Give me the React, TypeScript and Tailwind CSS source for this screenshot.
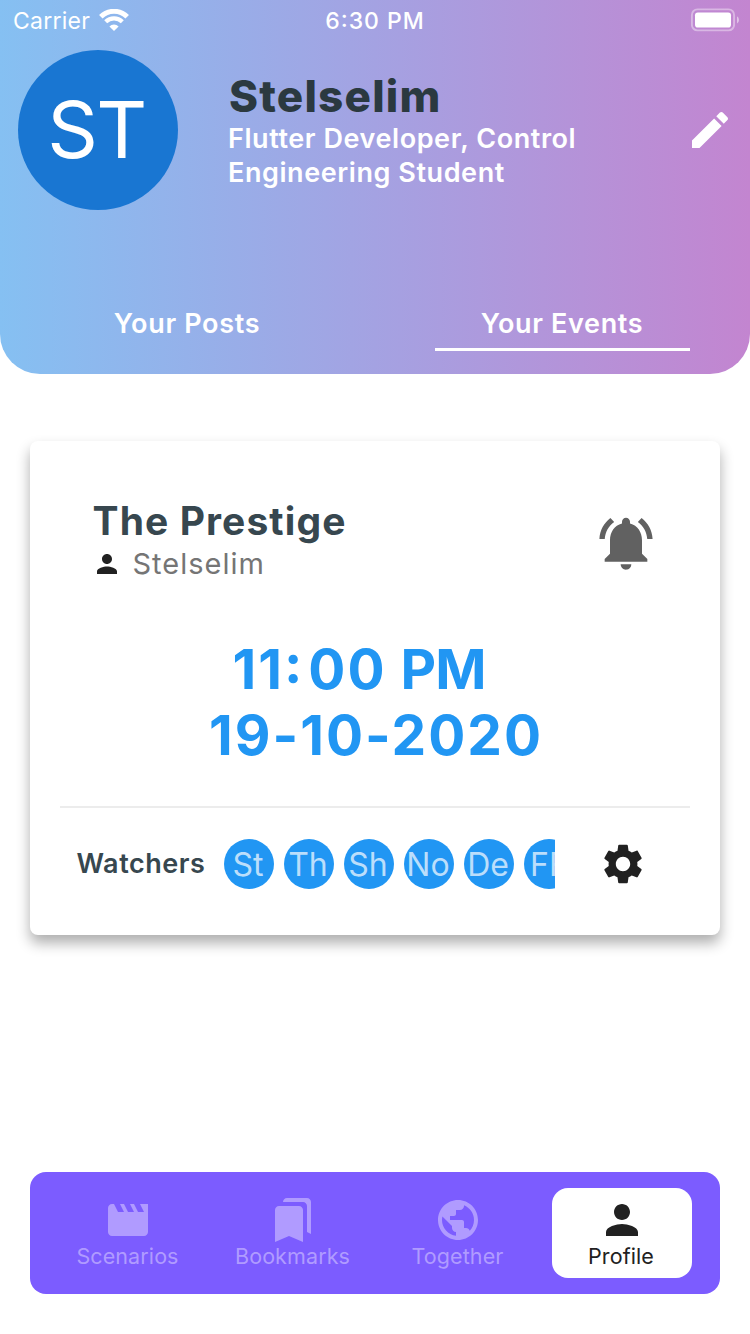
import type { ReactNode } from "react";

const ICONS = {
  edit: "M3 17.25V21h3.75L17.81 9.94l-3.75-3.75L3 17.25zM20.71 7.04c.39-.39.39-1.02 0-1.41l-2.34-2.34c-.39-.39-1.02-.39-1.41 0l-1.83 1.83 3.75 3.75 1.83-1.83z",
  person: "M12 12c2.21 0 4-1.79 4-4s-1.79-4-4-4-4 1.79-4 4 1.79 4 4 4zm0 2c-2.67 0-8 1.34-8 4v2h16v-2c0-2.66-5.33-4-8-4z",
  bell: "M7.58 4.08L6.15 2.65C3.75 4.48 2.17 7.3 2.03 10.5h2c.15-2.65 1.51-4.97 3.55-6.42zm12.39 6.42h2c-.15-3.2-1.73-6.02-4.12-7.85l-1.42 1.43c2.02 1.45 3.39 3.77 3.54 6.42zM18 11c0-3.07-1.64-5.64-4.5-6.32V4c0-.83-.67-1.5-1.5-1.5s-1.5.67-1.5 1.5v.68C7.63 5.36 6 7.92 6 11v5l-2 2v1h16v-1l-2-2v-5zm-6 11c.14 0 .27-.01.4-.04.65-.14 1.18-.58 1.44-1.18.1-.24.15-.5.15-.78h-4c.01 1.1.9 2 2.01 2z",
  gear: "M19.14 12.94c.04-.3.06-.61.06-.94 0-.32-.02-.64-.07-.94l2.03-1.58c.18-.14.23-.41.12-.61l-1.92-3.32c-.12-.22-.37-.29-.59-.22l-2.39.96c-.5-.38-1.03-.7-1.62-.94l-.36-2.54c-.04-.24-.24-.41-.48-.41h-3.84c-.24 0-.43.17-.47.41l-.36 2.54c-.59.24-1.13.57-1.62.94l-2.39-.96c-.22-.08-.47 0-.59.22L2.74 8.87c-.12.21-.08.47.12.61l2.03 1.58c-.05.3-.09.63-.09.94s.02.64.07.94l-2.03 1.58c-.18.14-.23.41-.12.61l1.92 3.32c.12.22.37.29.59.22l2.39-.96c.5.38 1.03.7 1.62.94l.36 2.54c.05.24.24.41.48.41h3.84c.24 0 .44-.17.47-.41l.36-2.54c.59-.24 1.13-.56 1.62-.94l2.39.96c.22.08.47 0 .59-.22l1.92-3.32c.12-.22.07-.47-.12-.61l-2.01-1.58zM12 15.6c-1.98 0-3.6-1.62-3.6-3.6s1.62-3.6 3.6-3.6 3.6 1.62 3.6 3.6-1.62 3.6-3.6 3.6z",
  movie: "M18 4l2 4h-3l-2-4h-2l2 4h-3l-2-4H8l2 4H7L5 4H4c-1.1 0-1.99.9-1.99 2L2 18c0 1.1.9 2 2 2h16c1.1 0 2-.9 2-2V4h-4z",
  bookmarks: "M19 18l2 1V3c0-1.1-.9-2-2-2H8.99C7.89 1 7 1.9 7 3h10c1.1 0 2 .9 2 2v13zM15 5H5c-1.1 0-2 .9-2 2v16l7-3 7 3V7c0-1.1-.9-2-2-2z",
  globe: "M12 2C6.48 2 2 6.48 2 12s4.48 10 10 10 10-4.48 10-10S17.52 2 12 2zm-1 17.93c-3.95-.49-7-3.85-7-7.93 0-.62.08-1.21.21-1.79L9 15v1c0 1.1.9 2 2 2v1.93zm6.9-2.54c-.26-.81-1-1.39-1.9-1.39h-1v-3c0-.55-.45-1-1-1H8v-2h2c.55 0 1-.45 1-1V7h2c1.1 0 2-.9 2-2v-.41c2.93 1.19 5 4.06 5 7.41 0 2.08-.8 3.97-2.1 5.39z",
};

function Icon({ name, className }: { name: keyof typeof ICONS; className: string }) {
  return (
    <svg viewBox="0 0 24 24" fill="currentColor" className={`shrink-0 ${className}`}>
      <path d={ICONS[name]} />
    </svg>
  );
}

function StatusBar() {
  return (
    <div className="grid h-10 grid-cols-3 items-center pt-[2px] text-[23px] leading-[38px] text-white">
      <div className="flex items-center pl-[13px]">
        <span className="tracking-[0.25px]">Carrier</span>
        <svg viewBox="0 0 30 22" className="mb-[3px] ml-[9px] h-[22px] w-[30px]" fill="none" stroke="white">
          <path d="M1.8 7.7 A18.8 18.8 0 0 1 28.2 7.7" strokeWidth="5" />
          <path d="M6.7 12.8 A11.8 11.8 0 0 1 23.3 12.8" strokeWidth="4.2" />
          <path d="M15 22 L10.4 17.4 A6.6 6.6 0 0 1 19.6 17.4 Z" fill="white" stroke="none" />
        </svg>
      </div>
      <div className="text-center font-medium tracking-[1px] [font-feature-settings:'case']">6:30 PM</div>
      <div className="flex justify-end pb-[2px] pr-[11px]">
        <svg viewBox="0 0 49 24" className="h-6 w-[49px]">
          <rect x="1.9" y="1.4" width="42.2" height="21" rx="5.5" fill="none" stroke="white" strokeOpacity="0.4" strokeWidth="1.9" />
          <rect x="5" y="4.5" width="36" height="15" rx="2.8" fill="white" />
          <path d="M47 8.2 q2 1.4 2 3.7 t-2 3.7z" fill="white" fillOpacity="0.5" />
        </svg>
      </div>
    </div>
  );
}

function Header() {
  return (
    <header className="h-[373.5px] rounded-b-[40px] bg-[linear-gradient(90deg,#85c0f2_0%,#a4a2e2_50%,#c385d0_100%)]">
      <StatusBar />
      <div className="mt-[10px] flex h-40 items-center pl-[18px] pr-4">
        <div className="flex size-40 shrink-0 items-center justify-center rounded-full bg-[#1976d2] pb-px pr-[3px] text-[79px] tracking-[-1.7px] text-white">
          ST
        </div>
        <div className="ml-[50px] w-[400px]">
          <h1 className="pl-px text-[44px] font-extrabold leading-[50px] tracking-[1.2px] text-[#2b3940]">Stelselim</h1>
          <p className="-mb-px pt-px text-[27px] font-[560] leading-[34px] tracking-[0.57px] text-white">
            Flutter Developer, Control
            <br />
            Engineering Student
          </p>
        </div>
        <Icon name="edit" className="ml-auto size-12 text-white" />
      </div>
      <div className="mt-[97px] grid grid-cols-2 text-center text-[27px] font-semibold leading-[34px] tracking-[0.66px] text-white">
        <div className="mx-[60px] pr-px">Your Posts</div>
        <div className="mx-[60px] border-b-[3px] border-white pb-[7px]">
          <span className="pr-px">Your Events</span>
        </div>
      </div>
    </header>
  );
}

const WATCHERS = ["St", "Th", "Sh", "No", "De", "FF"];

function EventCard() {
  return (
    <section className="mx-[30px] mt-[67.5px] h-[494px] rounded-[8px] bg-white shadow-[0_8px_14px_rgba(0,0,0,0.32)]">
      <div className="flex justify-between pl-[62px] pr-[62px] pt-[55px]">
        <div>
          <h2 className="pl-[0.5px] text-[39px] font-bold leading-[50px] tracking-[1.1px] text-[#37474f]">The Prestige</h2>
          <div className="flex items-center">
            <Icon name="person" className="mt-px size-[30px] text-[#212121]" />
            <span className="ml-[10.5px] text-[29px] leading-[35px] tracking-[1px] text-[#757575]">Stelselim</span>
          </div>
        </div>
        <Icon name="bell" className="mt-[15px] size-16 text-[#616161]" />
      </div>
      <div className="mt-[55px] text-center text-[55px] font-bold leading-[66px] tracking-[2px] text-[#2196f3]">
        <div className="pr-[32px] [font-feature-settings:'case']">
          11<span className="pr-[4px]">:</span>00 <span className="-ml-px tracking-[-1px]">PM</span>
        </div>
        <div className="pl-[2px]">19-10-2020</div>
      </div>
      <div className="mx-[30px] mt-[38px] h-[2px] bg-[#ececec]" />
      <div className="mt-[31px] flex h-[50px] items-center pl-[46.5px]">
        <span className="w-[147.5px] shrink-0 text-[27px] font-[560] tracking-[0.55px] text-[#37474f]">Watchers</span>
        <div className="flex w-[331px] gap-[10px] overflow-hidden">
          {WATCHERS.map((w) => (
            <div
              key={w}
              className="flex size-[50px] shrink-0 items-center justify-center whitespace-nowrap rounded-full bg-[#2196f3] pr-[2px] pt-px text-[32px] leading-[49px] text-[#bbdefb] last:pr-0"
            >
              {w}
            </div>
          ))}
        </div>
        <Icon name="gear" className="ml-[44px] size-12 text-[#212121]" />
      </div>
    </section>
  );
}

function NavItem({ icon, children, active }: { icon: keyof typeof ICONS; children: ReactNode; active?: boolean }) {
  return (
    <div className="flex w-[165px] justify-center">
      <div
        className={`flex h-[90px] flex-col items-center rounded-[16px] pt-2 text-[21.5px] leading-[25px] tracking-[0.1px] ${
          active ? "mr-[1.5px] w-[139.5px] bg-white text-[#212121]" : "w-[140px] text-[#b09bff]"
        }`}
      >
        <Icon name={icon} className="size-12" />
        <span className={active ? "pr-[1.5px]" : ""}>{children}</span>
      </div>
    </div>
  );
}

export default function App() {
  return (
    <div className="flex h-[1334px] w-[750px] flex-col overflow-hidden bg-white font-[Inter,sans-serif]">
      <Header />
      <EventCard />
      <nav className="mx-[30px] mb-10 mt-auto flex h-[122px] items-center rounded-[16px] bg-[#7c5cff] px-[15px]">
        <NavItem icon="movie">Scenarios</NavItem>
        <NavItem icon="bookmarks">Bookmarks</NavItem>
        <NavItem icon="globe">Together</NavItem>
        <NavItem icon="person" active>
          Profile
        </NavItem>
      </nav>
    </div>
  );
}
